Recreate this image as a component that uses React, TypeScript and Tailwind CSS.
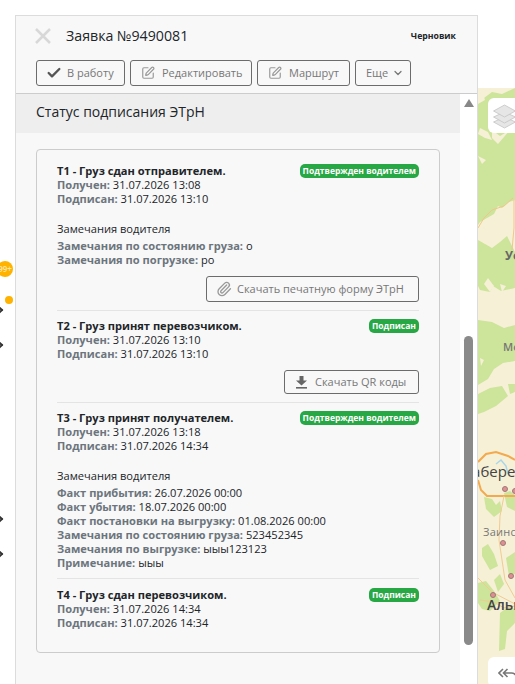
import { Check, ChevronDown, Paperclip, SquarePen } from 'lucide-react'
import type { ReactNode } from 'react'

const Field = ({ label, value }: { label: string; value: string }) => (
  <p>
    <span className="font-bold text-[#6c757d]">{label}:</span> {value}
  </p>
)

const Badge = ({ children }: { children: ReactNode }) => (
  <span className="h-[14px] rounded-[5px] bg-[#28a745] px-[3px] text-[8.5px] font-bold leading-[14px] text-white">{children}</span>
)

const Head = ({ title, badge }: { title: string; badge: string }) => (
  <div className="flex items-start justify-between">
    <p className="font-bold text-[#212529]">{title}</p>
    <Badge>{badge}</Badge>
  </div>
)

const Btn = ({ icon, children, className }: { icon: ReactNode; children: ReactNode; className: string }) => (
  <button className={'flex items-center rounded-[3px] border border-[#6c6c6c] text-[11px] text-[#777] ' + className}>
    {icon}
    {children}
  </button>
)

function Map() {
  return (
    <svg viewBox="0 0 37 596" className="h-[596px] w-[37px] shrink-0">
      <rect width="37" height="596" fill="#f6f0d6" />
      {/* зелень верх */}
      <path d="M0 6l6 4 8-6 10 2 13-6v112l-6 2-7 6-4-2-4 8-14 8-2 3zM0 152l14 8 8-6 7-6 8 16v36l-14 3-8-5-3 6-10-2-2-4zM0 232l14 2 12 6 11-3v36l-12 2-9 6-6 10-10 6z" fill="#cde49b" />
      <path d="M0 6h5l2 6-7 4zM2 40l8 4 4 8-7-2-7-4zM14 42l8 6 10-6-12 14-6-6zM0 68l8 4-4 4zM6 196l4-6 6 8-4 6zM22 196l6 2-4 6zM2 270l4 2-3 6z" fill="#f6f0d6" />
      {/* зелень низ */}
      <path d="M0 306l12-6 12-2 6 10-12 10-12 6-6 2zM30 296h7v8l-5 2zM6 409l8 2 4 6 4-4 2 10-8 6-8-8zM26 405l6-2 5 4v16l-8-4zM4 460l6-4 6 10 4 12-8 4-8-14zM28 470l9-6v22l-6 2zM0 495l8-2 8 10 6 10-10 10-8-2-4-6zM22 525l8-6 7 2v14l-8 8-2 18-6 2zM16 492l6-6 4 10-6 8zM24 590l6-14 7-6v26h-14z" fill="#cde49b" />
      {/* дороги */}
      <path d="M0 140l6-10 8-8 12-4 9-8M36 112v28l-2 22" fill="none" stroke="#eec88a" strokeWidth="1" />
      <path d="M0 374l8-8 10-2 12 4 7 4M0 392l3 10 6 6h28" fill="none" stroke="#f4a94e" strokeWidth="2" />
      <path d="M26 408l-4 20-1 24 6 40 10 18M0 490l14 14 23 12M2 512l14 2 10 6 11-2" fill="none" stroke="#f1cb92" strokeWidth="1" />
      <path d="M18 376l5-4 5 6 2 8" fill="none" stroke="#a9d6ea" strokeWidth="1.5" />
      <circle cx="27" cy="401" r="2.5" fill="#df8f8f" stroke="#a07878" />
      <circle cx="37" cy="403" r="2.5" fill="#df8f8f" stroke="#a07878" />
      <circle cx="25" cy="455" r="2.5" fill="#df8f8f" stroke="#a07878" />
      <circle cx="33" cy="488" r="2.5" fill="#df8f8f" stroke="#a07878" />
      <circle cx="15" cy="507" r="2.5" fill="#df8f8f" stroke="#a07878" />
    </svg>
  )
}

export default function App() {
  return (
    <div className="flex h-[684px] w-[515px] overflow-hidden bg-white font-['Open_Sans',sans-serif] text-[11.1px] leading-[14px] text-[#212529]">
      {/* левая панель */}
      <div className="relative w-[15px] shrink-0">
        <span className="absolute left-[-3px] top-[261px] flex h-4 w-4 items-center justify-center rounded-full bg-[#ffb300] text-[8px] font-semibold text-[#ffe9b0]">99+</span>
        <span className="absolute left-[5px] top-[296px] h-2 w-2 rounded-full bg-[#ffb300]" />
        <span className="absolute left-[-4px] top-[307px] h-[6px] w-[6px] rotate-45 border-r-2 border-t-2 border-[#333]" />
        <span className="absolute left-[-4px] top-[342px] h-[6px] w-[6px] rotate-45 border-r-2 border-t-2 border-[#333]" />
        <span className="absolute left-[-4px] top-[516px] h-[6px] w-[6px] rotate-45 border-r-2 border-t-2 border-[#333]" />
        <span className="absolute left-[-4px] top-[551px] h-[6px] w-[6px] rotate-45 border-r-2 border-t-2 border-[#333]" />
      </div>

      {/* заявка */}
      <div className="mt-[15px] flex w-[463px] shrink-0 flex-col border-x border-t border-[#dcdcdc] bg-[#f8f8f8]">
        <div className="h-[78px] shrink-0 border-b border-[#ccc] px-5">
          <div className="flex h-[40px] items-center">
            <svg width="16" height="16" viewBox="0 0 16 16" className="ml-[-1px] shrink-0" stroke="#d8d8d8" strokeWidth="2.6">
              <path d="M1 1l14 14M15 1L1 15" />
            </svg>
            <h1 className="ml-[15px] text-[14.2px] leading-5 text-[#212529]">Заявка №9490081</h1>
            <span className="ml-auto mr-[1px] text-[8.7px] font-bold text-[#212529]">Черновик</span>
          </div>
          <div className="mt-[4px] flex gap-[5px]">
            <Btn className="h-[26px] w-[89px] gap-[5px] pl-[9px]" icon={<Check size={16} strokeWidth={3.5} className="text-[#555]" />}>В работу</Btn>
            <Btn className="h-[26px] w-[122px] gap-[7px] pl-[10px]" icon={<SquarePen size={14} className="text-[#999]" />}>Редактировать</Btn>
            <Btn className="h-[26px] w-[93px] gap-[7px] pl-[10px]" icon={<SquarePen size={14} className="text-[#999]" />}>Маршрут</Btn>
            <Btn className="h-[26px] w-[56px] gap-[4px] pl-[10px]" icon={null}>Еще <ChevronDown size={12} strokeWidth={2.5} /></Btn>
          </div>
        </div>

        <div className="flex min-h-0 flex-1">
          <div className="w-[444px] shrink-0">
            <h2 className="flex h-[39px] items-center bg-[#eeeeee] px-5 pb-[3px] text-[14px] font-medium text-[#212529]">Статус подписания ЭТрН</h2>
            <div className="ml-5 mt-[16px] h-[504px] w-[404px] rounded-[4px] border border-[#ccc] px-5 pt-[14px]">
              <Head title="Т1 - Груз сдан отправителем." badge="Подтвержден водителем" />
              <Field label="Получен" value="31.07.2026 13:08" />
              <Field label="Подписан" value="31.07.2026 13:10" />
              <p className="mt-[16px]">Замечания водителя</p>
              <div className="mt-[3px]">
                <Field label="Замечания по состоянию груза" value="о" />
                <Field label="Замечания по погрузке" value="ро" />
              </div>
              <div className="mt-[9px] flex justify-end">
                <Btn className="h-[26px] w-[213px] gap-[5px] pl-[9px]" icon={<Paperclip size={16} className="text-[#999]" />}>Скачать печатную форму ЭТрН</Btn>
              </div>
              <div className="mb-[8px] mt-[8px] border-t border-[#e4e4e4]" />

              <Head title="Т2 - Груз принят перевозчиком." badge="Подписан" />
              <Field label="Получен" value="31.07.2026 13:10" />
              <Field label="Подписан" value="31.07.2026 13:10" />
              <div className="mt-[9px] flex justify-end">
                <Btn
                  className="h-[24px] w-[135px] gap-[8px] pl-[11px]"
                  icon={
                    <svg width="11" height="13" viewBox="0 0 11 13" fill="#666" className="shrink-0">
                      <path d="M3.5 0h4v4.5H11L5.5 9.5 0 4.5h3.5z" />
                      <rect y="11" width="11" height="1.6" />
                    </svg>
                  }
                >
                  Скачать QR коды
                </Btn>
              </div>
              <div className="mb-[8px] mt-[8px] border-t border-[#e4e4e4]" />

              <Head title="Т3 - Груз принят получателем." badge="Подтвержден водителем" />
              <Field label="Получен" value="31.07.2026 13:18" />
              <Field label="Подписан" value="31.07.2026 14:34" />
              <p className="mt-[16px]">Замечания водителя</p>
              <div className="mt-[3px]">
                <Field label="Факт прибытия" value="26.07.2026 00:00" />
                <Field label="Факт убытия" value="18.07.2026 00:00" />
                <Field label="Факт постановки на выгрузку" value="01.08.2026 00:00" />
                <Field label="Замечания по состоянию груза" value="523452345" />
                <Field label="Замечания по выгрузке" value="ыыы123123" />
                <Field label="Примечание" value="ыыы" />
              </div>
              <div className="mb-[9px] mt-[8px] border-t border-[#e4e4e4]" />

              <Head title="Т4 - Груз сдан перевозчиком." badge="Подписан" />
              <Field label="Получен" value="31.07.2026 14:34" />
              <Field label="Подписан" value="31.07.2026 14:34" />
            </div>
          </div>
          {/* скроллбар */}
          <div className="flex w-[17px] shrink-0 flex-col items-center bg-white">
            <span className="mt-[5px] h-0 w-0 border-x-[5px] border-b-[8px] border-x-transparent border-b-[#888]" />
            <span className="mt-[229px] h-[309px] w-[9px] rounded-full bg-[#8a8a8a]" />
          </div>
        </div>
      </div>

      {/* карта */}
      <div className="relative flex flex-1 flex-col overflow-hidden pt-[88px]">
        <Map />
        <div className="absolute left-[10px] top-[98px] flex h-[35px] w-[40px] items-center rounded-[6px] bg-white pl-[4px]">
          <svg width="25" height="26" viewBox="0 0 24 26" fill="#e6e6e6" stroke="#c4c4c4" strokeWidth="0.8" className="shrink-0">
            <path d="M12 14L1 19l11 6 11-6z" />
            <path d="M12 9L1 14l11 6 11-6z" />
            <path d="M12 2L1 8l11 6 11-6z" />
          </svg>
        </div>
        <span className="absolute left-[27px] top-[249px] text-[12px] font-bold text-[#666]">Уфа</span>
        <span className="absolute left-[25px] top-[340px] whitespace-nowrap text-[11px] font-semibold text-[#777]">Мо</span>
        <span className="absolute left-[-17px] top-[464px] whitespace-nowrap text-[15px] text-[#444]">Набережные</span>
        <span className="absolute left-[5px] top-[525px] whitespace-nowrap text-[11px] tracking-wide text-[#777]">Заинск</span>
        <span className="absolute left-[9px] top-[598px] whitespace-nowrap text-[14px] font-semibold text-[#444]">Альметьевск</span>
        <div className="absolute left-[10px] top-[657px] flex h-[30px] w-[40px] items-start rounded-[6px] bg-white pl-[10px] pt-[10px]">
          <svg width="22" height="15" viewBox="0 0 22 15" fill="none" stroke="#777" strokeWidth="1.6" className="shrink-0">
            <path d="M5 2L1 6l4 4M9.5 2L5.5 6l4 4M5.5 6h8a5 5 0 0 1 5 5v3" />
          </svg>
        </div>
      </div>
    </div>
  )
}
